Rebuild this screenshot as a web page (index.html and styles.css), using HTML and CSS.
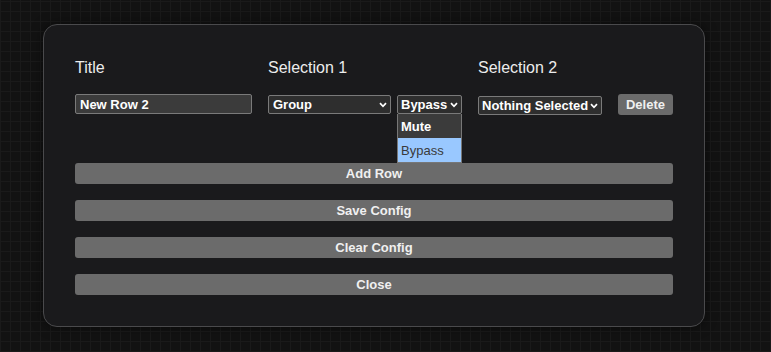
FILE: index.html
```html
<!DOCTYPE html>
<html lang="en">
<head>
  <meta charset="UTF-8">
  <title>Row Config</title>
  <link rel="stylesheet" href="styles.css">
</head>
<body>
	<div class="dialog">
		<div class="rows">
			<div class="head">Title</div>
			<div class="head">Selection 1</div>
			<div class="head">Selection 2</div>
			<div></div>

			<div class="cell">
				<input type="text" class="title-input" value="New Row 2">
			</div>
			<div class="cell sel1">
				<select class="sel sel-group">
					<option>Group</option>
				</select>
				<div class="open-wrap">
					<select class="sel sel-mode">
						<option>Mute</option>
						<option selected>Bypass</option>
					</select>
					<ul class="popup">
						<li class="mute">Mute</li>
						<li class="active">Bypass</li>
					</ul>
				</div>
			</div>
			<div class="cell">
				<select class="sel sel-two">
					<option>Nothing Selected</option>
				</select>
			</div>
			<div class="cell">
				<button type="button" class="btn-del">Delete</button>
			</div>
		</div>
		<div class="actions">
			<button type="button" class="btn-wide">Add Row</button>
			<button type="button" class="btn-wide">Save Config</button>
			<button type="button" class="btn-wide">Clear Config</button>
			<button type="button" class="btn-wide">Close</button>
		</div>
	</div>
</body>
</html>
```

FILE: styles.css
```css
html, body { margin: 0; height: 100%; }
body{
	color-scheme: dark;
	font-family: "Liberation Sans", Arial, sans-serif;
	background-color: #121212;
	background-image:
		repeating-linear-gradient(0deg, #1a1a1a 0, #1a1a1a 1px, transparent 1px, transparent 10px),
		repeating-linear-gradient(90deg, #1a1a1a 0, #1a1a1a 1px, transparent 1px, transparent 10px);
	padding: 24px 0 0 43px;
	box-sizing: border-box;
	overflow: hidden;
}
.dialog{
	width: 662px;
	height: 303px;
	box-sizing: border-box;
	background: #1a1a1c;
	border: 1px solid #4a4a4c;
	border-radius: 14px;
	padding: 32px 31px;
	box-shadow: 0 0 12px rgba(0,0,0,0.5);
}
.rows{
	display: grid;
	grid-template-columns: 193px 210px 140px auto;
	row-gap: 15px;
}
.head{
	font-size: 16px;
	line-height: 22px;
	color: #ececec;
}
.cell{
	display: flex;
	align-items: flex-start;
	height: 21px;
}
.sel1{ gap: 6px; }
.title-input{
	width: 177px;
	height: 20px;
	box-sizing: border-box;
	background: #3b3b3b;
	border: 1px solid #7a7a7a;
	border-radius: 2px;
	color: #fff;
	font: bold 13px "Liberation Sans", Arial, sans-serif;
	padding: 0 4px;
	outline: none;
}
.sel{
	appearance: none;
	height: 19px;
	box-sizing: border-box;
	background-color: #2e2e2e;
	background-image: url("data:image/svg+xml;utf8,<svg xmlns='http://www.w3.org/2000/svg' width='8' height='6' viewBox='0 0 8 6'><path d='M1 1.2 L4 4.3 L7 1.2' fill='none' stroke='white' stroke-width='1.7'/></svg>");
	background-repeat: no-repeat;
	background-position: right 3px center;
	border: 1px solid #7a7a7a;
	border-radius: 2px;
	color: #fff;
	font: bold 13px "Liberation Sans", Arial, sans-serif;
	padding: 0 12px 0 4px;
	margin: 1px 0 0 0;
}
.sel-group{ width: 123px; }
.sel-mode{ width: 65px; padding-left: 3px; }
.sel-two{ width: 124px; margin-top: 2px; padding-left: 3px; padding-right: 11px; }
.open-wrap{ position: relative; }
.popup{
	position: absolute;
	left: 0;
	top: 20px;
	width: 65px;
	box-sizing: border-box;
	margin: 0;
	padding: 0;
	list-style: none;
	border: 1px solid #777;
	border-top: none;
	background: #3b3b3b;
	font-size: 13px;
	z-index: 5;
}
.popup li{
	height: 24px;
	line-height: 25px;
	padding-left: 3px;
	color: #fff;
}
.popup li.mute{ font-weight: bold; }
.popup li.active{
	background: #99c8ff;
	color: #3a3a3a;
}
.btn-del{
	width: 55px;
	height: 21px;
	background: #6b6b6b;
	border: none;
	border-radius: 3px;
	color: #f0f0f0;
	font: bold 13px "Liberation Sans", Arial, sans-serif;
	padding: 0;
	cursor: pointer;
}
.actions{
	display: flex;
	flex-direction: column;
	gap: 16px;
	margin-top: 48px;
}
.btn-wide{
	height: 21px;
	background: #6b6b6b;
	border: none;
	border-radius: 3px;
	color: #f0f0f0;
	font: bold 13px "Liberation Sans", Arial, sans-serif;
	padding: 0;
	cursor: pointer;
}
```
